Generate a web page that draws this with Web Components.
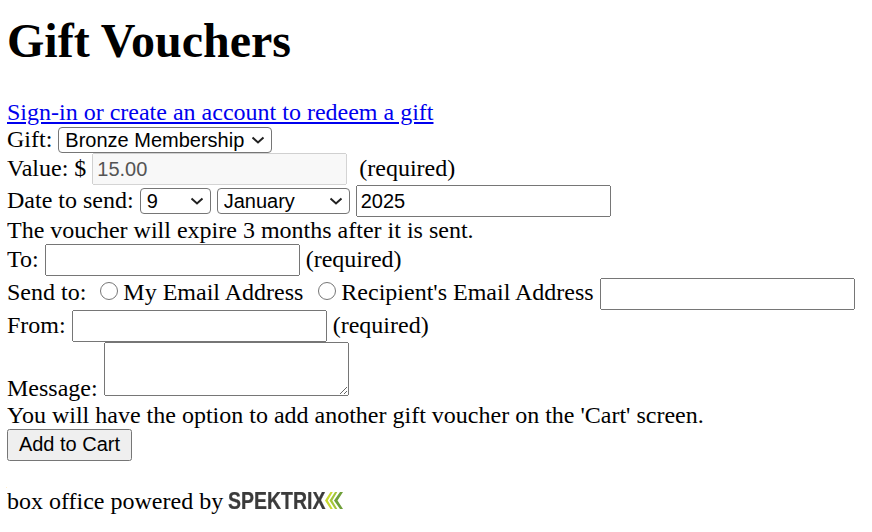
<!DOCTYPE html>
<html lang="en">
<head>
<meta charset="utf-8">
<title>Gift Vouchers</title>
<style>
  body { margin: 7px; font: 24px "Liberation Serif", serif; color: #000; background: #fff; }
</style>
</head>
<body>
<gift-voucher-page></gift-voucher-page>

<template id="logo-tpl">
  <style>
    :host { display: inline-block; vertical-align: -6.500px; width: 116px; height: 30px; margin-left: -1px; }
    svg { display: block; filter: blur(0.35px); }
    text { font: bold 19.500px "Liberation Sans", sans-serif; fill: #3b3b3b; stroke: #3b3b3b; stroke-width: 0.2px; }
  </style>
  <svg width="116" height="30" viewBox="0 0 116 30">
    <text transform="translate(0 24) scale(1 1.22)">SPEKTRIX</text>
    <path d="M102.500 7 97 15.500l5.500 8.500h2.300L99.800 15.500 104.800 7z" fill="#c9d92e"/>
    <path d="M107 7 101.500 15.500l5.500 8.500h2.300L104.300 15.500 109.300 7z" fill="#a4c63a"/>
    <path d="M112 7 106 15.500l6 8.500h3L109.500 15.500 115 7z" fill="#6fa03a"/>
  </svg>
</template>

<template id="page-tpl">
  <style>
    :host { display: block; }
    h1 { font: bold 48px "Liberation Serif", serif; margin: 6px 0 31px; }
    a { color: #00e; }
    input, select, button, textarea { font: 20px "Liberation Sans", sans-serif; }
    input[type=text] { box-sizing: border-box; width: 255px; height: 32px; padding: 1px 3px; }
    select {
      box-sizing: border-box; height: 26px; padding: 0 0 0 6px; appearance: none;
      border: 1px solid #767676; border-radius: 4px; color: #000;
      background: #fff url("data:image/svg+xml,%3Csvg xmlns='http://www.w3.org/2000/svg' width='14' height='8'%3E%3Cpath d='M1.500 1.500 7 6.500l5.500-5' fill='none' stroke='%23222' stroke-width='2'/%3E%3C/svg%3E") no-repeat right 6px center;
    }
    button { box-sizing: border-box; height: 32px; width: 125px; padding: 0 6px 2px; }
    textarea { box-sizing: border-box; width: 245px; height: 54px; padding: 2px; margin: 0; }
    input[type=radio] { margin: 3px 5px 2px 2px; width: 18px; height: 18px; }
    input.second { margin-left: 3px; }
    input.other { margin: 2px 0 0 0; vertical-align: -1px; }
    .footer { margin-top: 24px; }
  </style>
  <h1>Gift Vouchers</h1>
  <a href="#">Sign-in or create an account to redeem a gift</a><br>
  <label>Gift:</label>
  <select style="width:214px"><option>Bronze Membership</option></select><br>
  <label>Value: $</label>
  <input type="text" value="15.00" disabled> &nbsp;(required)<br>
  <label>Date to send:</label>
  <select style="width:71px"><option>9</option></select>
  <select style="width:133px"><option>January</option></select>
  <input type="text" value="2025"><br>
  The voucher will expire 3 months after it is sent.<br>
  <label>To:</label>
  <input type="text"> (required)<br>
  <label>Send to:</label>&nbsp;
  <input type="radio" name="to">My Email Address &nbsp;<input class="second" type="radio" name="to">Recipient's Email Address
  <input class="other" type="text"><br>
  <label>From:</label>
  <input type="text"> (required)<br>
  <label>Message:</label>
  <textarea></textarea><br>
  You will have the option to add another gift voucher on the 'Cart' screen.<br>
  <button>Add to Cart</button>
  <div class="footer">box office powered by <spektrix-logo></spektrix-logo></div>
</template>

<script>
  class SpektrixLogo extends HTMLElement {
    constructor() {
      super();
      this.attachShadow({ mode: 'open' });
      this.shadowRoot.appendChild(document.getElementById('logo-tpl').content.cloneNode(true));
    }
  }

  class GiftVoucherPage extends HTMLElement {
    constructor() {
      super();
      this.attachShadow({ mode: 'open' });
      this.shadowRoot.appendChild(document.getElementById('page-tpl').content.cloneNode(true));
    }
  }

  customElements.define('spektrix-logo', SpektrixLogo);
  customElements.define('gift-voucher-page', GiftVoucherPage);
</script>
</body>
</html>
